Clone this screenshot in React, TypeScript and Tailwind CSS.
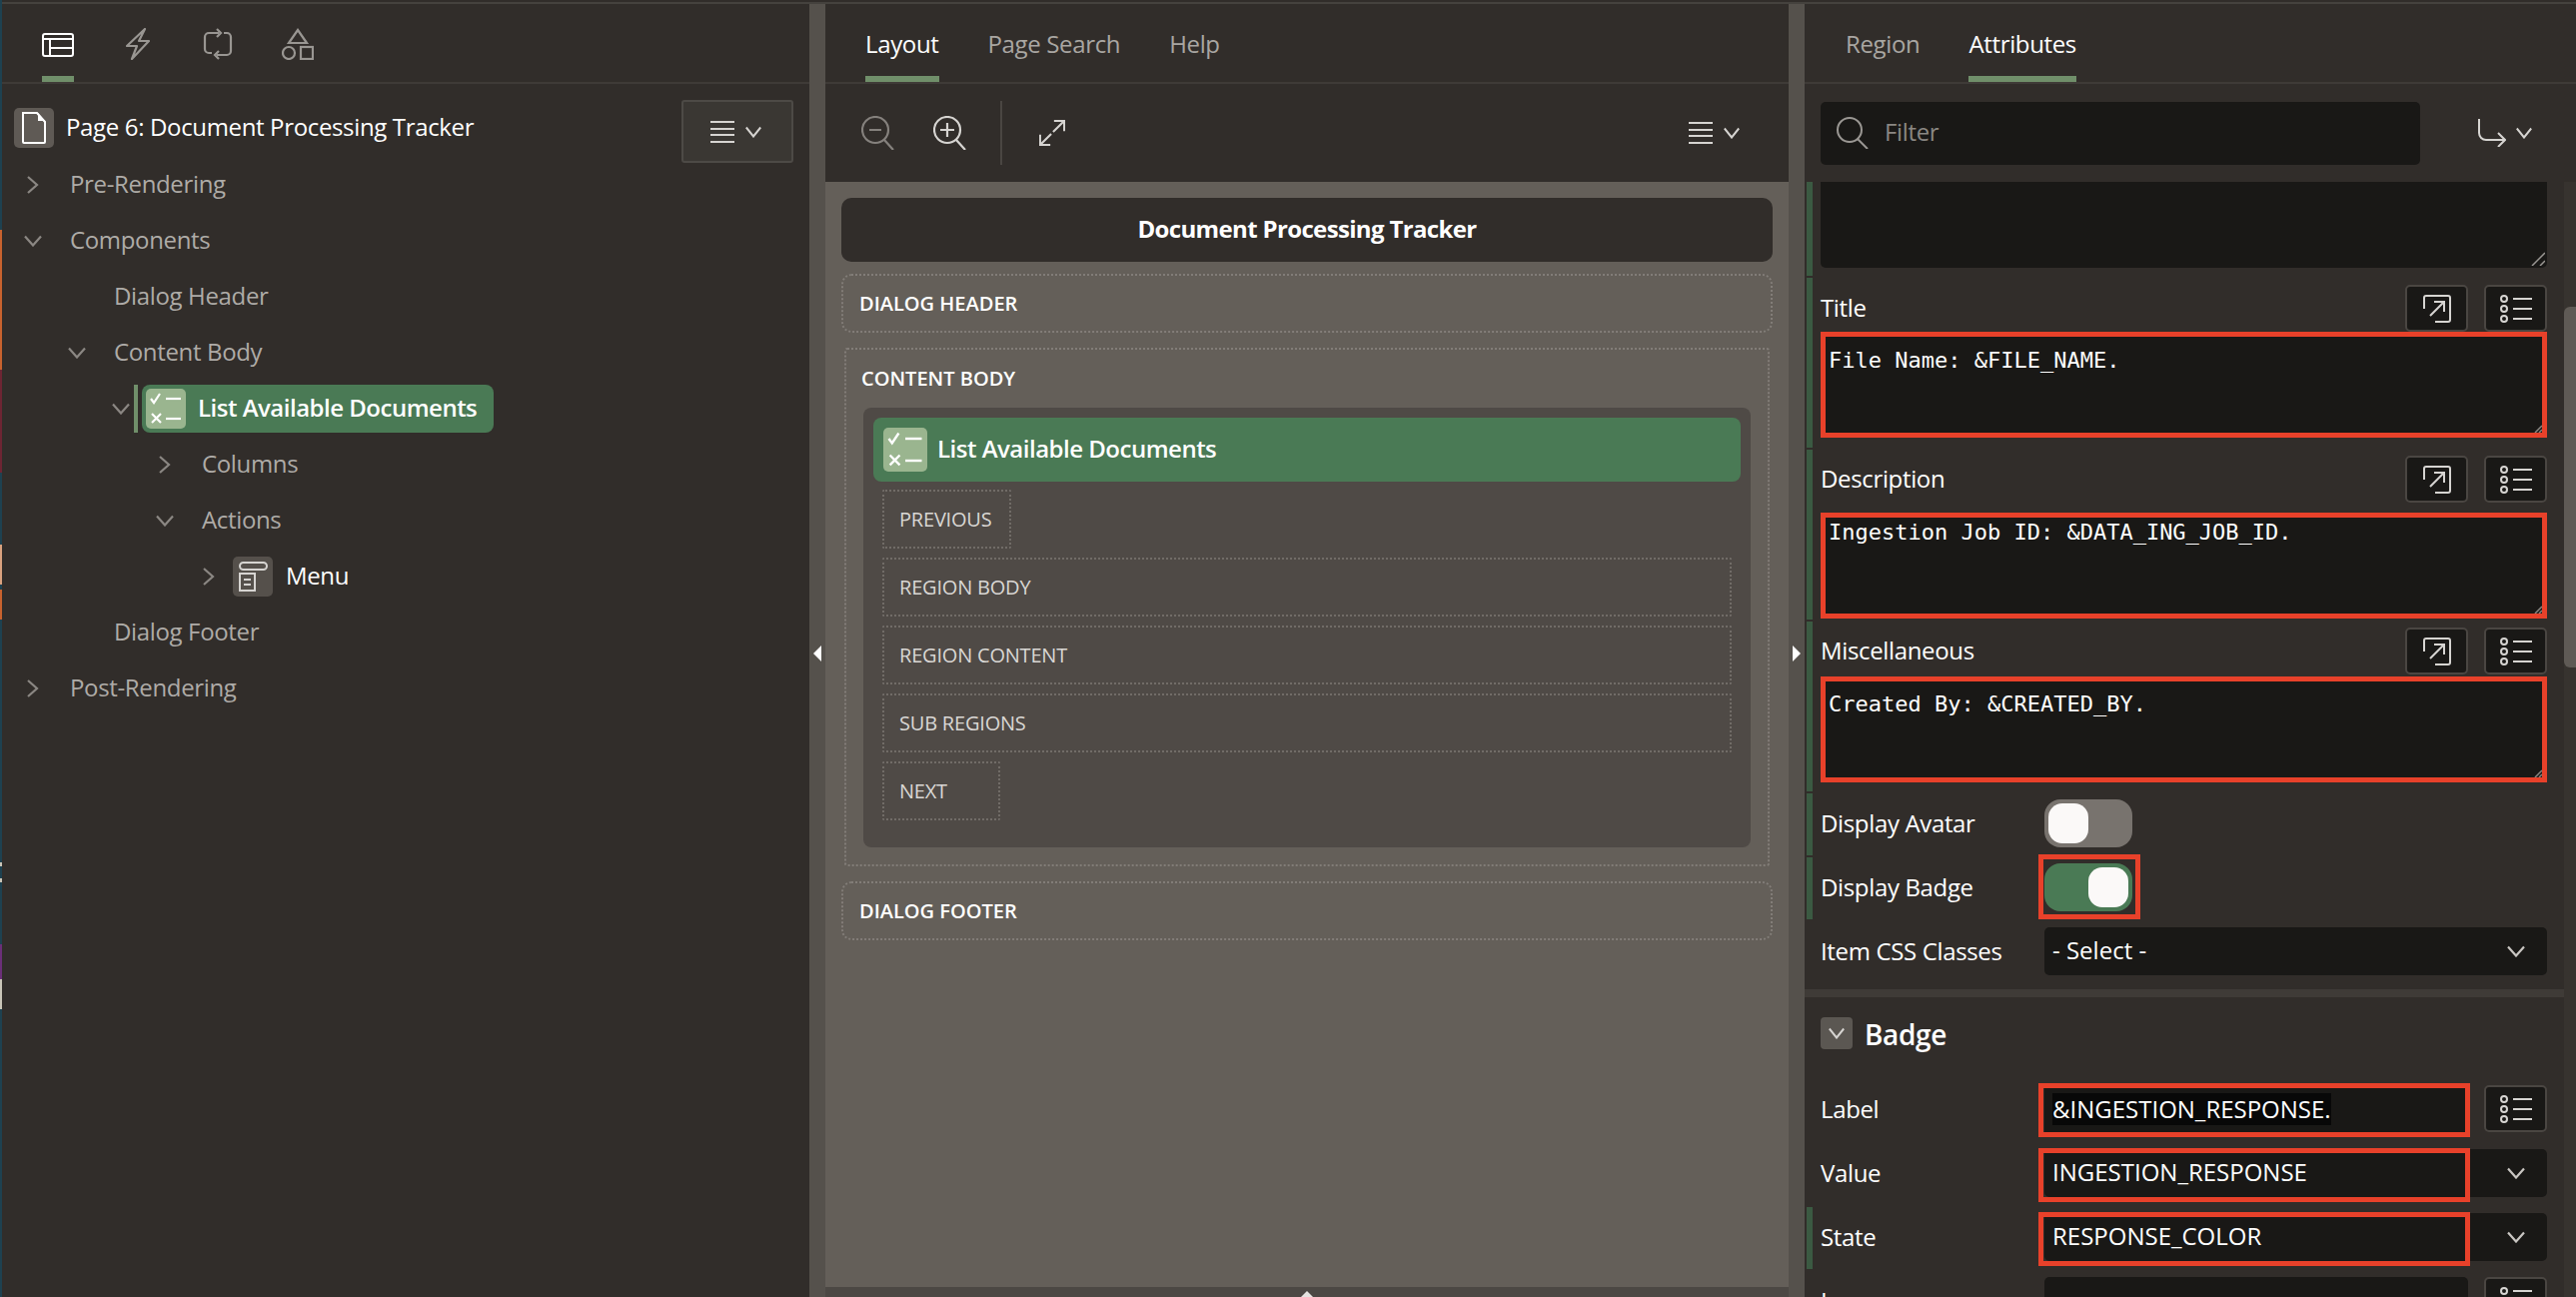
import React from 'react';

const edgeSegments = [
  { key: 'a', cls: 'h-[230px] bg-[#1e4150]' },
  { key: 'b', cls: 'h-[140px] bg-[#c8622e]' },
  { key: 'c', cls: 'h-[103px] bg-[#6d2533]' },
  { key: 'd', cls: 'h-[72px] bg-[#1e4150]' },
  { key: 'e', cls: 'h-[40px] bg-[#d9a27f]' },
  { key: 'f', cls: 'h-[5px] bg-[#1e4150]' },
  { key: 'g', cls: 'h-[30px] bg-[#c8622e]' },
  { key: 'h', cls: 'h-[243px] bg-[#1e4150]' },
  { key: 'i', cls: 'h-[4px] bg-[#c9c5b8]' },
  { key: 'j', cls: 'h-[12px] bg-[#1e4150]' },
  { key: 'k', cls: 'h-[4px] bg-[#c9c5b8]' },
  { key: 'l', cls: 'h-[62px] bg-[#1e4150]' },
  { key: 'm', cls: 'h-[35px] bg-[#6b2f78]' },
  { key: 'n', cls: 'h-[30px] bg-[#c9c5b8]' },
  { key: 'o', cls: 'h-[288px] bg-[#1e4150]' },
];

const ChevronRight = () => (
  <svg width="14" height="20" viewBox="0 0 14 20" fill="none" stroke="#8b8783" strokeWidth="2.2">
    <path d="M2 2l9 8-9 8" />
  </svg>
);

const ChevronDown = ({ color = '#8b8783', w = 20 }: { color?: string; w?: number }) => (
  <svg width={w} height="12" viewBox="0 0 20 12" fill="none" stroke={color} strokeWidth="2.2" preserveAspectRatio="none">
    <path d="M2 1.5l8 9 8-9" />
  </svg>
);

const ChecklistGlyph = ({ size }: { size: number }) => (
  <svg width={size} height={size} viewBox="0 0 40 40" fill="none" stroke="#ffffff" strokeWidth="2.2">
    <path d="M5 10l3 4 6-9" />
    <path d="M20 10h15" />
    <path d="M6 25l9 9M15 25l-9 9" />
    <path d="M20 30h15" />
  </svg>
);

const MenuLines = () => (
  <div className="flex items-center gap-[10px]">
    <svg width="24" height="22" viewBox="0 0 24 22" stroke="#d6d4d1" strokeWidth="2">
      <path d="M0 1h24M0 8h24M0 14h24M0 21h24" />
    </svg>
    <ChevronDown color="#d6d4d1" w={18} />
  </div>
);

const OpenGlyph = () => (
  <svg width="28" height="28" viewBox="0 0 28 28" fill="none" stroke="#d6d4d1" strokeWidth="2">
    <path d="M1 14V3a2 2 0 0 1 2-2h22a2 2 0 0 1 2 2v22a2 2 0 0 1-2 2H12" />
    <path d="M7 21L21 7M11 7h10v10" />
  </svg>
);

const ListGlyph = () => (
  <svg width="32" height="28" viewBox="0 0 32 28" fill="none" stroke="#d6d4d1" strokeWidth="2">
    <circle cx="4" cy="4" r="3" />
    <circle cx="4" cy="14" r="3" />
    <circle cx="4" cy="24" r="3" />
    <path d="M13 4h19M13 14h19M13 24h19" />
  </svg>
);

const IconButton = ({ children }: { children: React.ReactNode }) => (
  <div className="flex h-[47px] w-[63px] items-center justify-center rounded-[5px] border-2 border-[#4a4642] bg-[#191816]">
    {children}
  </div>
);

const Tab = ({ label, active }: { label: string; active?: boolean }) => (
  <div
    className={`flex h-full items-center pt-[8px] text-[24px] ${
      active ? 'border-b-[6px] border-[#708f6a] text-white' : 'border-b-[6px] border-transparent text-[#a9a6a2]'
    }`}
  >
    {label}
  </div>
);

const TreeRow = ({
  indent,
  chevron,
  label,
}: {
  indent: string;
  chevron?: 'right' | 'down';
  label: string;
}) => (
  <div className={`flex h-[56px] items-center ${indent}`}>
    <div className="flex w-[24px] shrink-0 items-center justify-center">
      {chevron === 'right' && <ChevronRight />}
      {chevron === 'down' && <ChevronDown />}
    </div>
    <span className="ml-[25px] pb-[3px] text-[24px] text-[#aeaba7]">{label}</span>
  </div>
);

const LeftPanel = () => (
  <div className="flex w-[808px] shrink-0 flex-col bg-[#312d2a]">
    <div className="flex h-[80px] shrink-0 items-stretch border-b-2 border-[#3f3b37] pl-[40px]">
      <div className="flex w-[32px] items-center justify-center border-b-[6px] border-[#708f6a] pt-[10px]">
        <svg width="32" height="24" viewBox="0 0 32 24" fill="none" stroke="#ffffff" strokeWidth="2">
          <rect x="1" y="1" width="30" height="22" rx="2" />
          <path d="M1 6h30M8 6v17M8 15h23" />
        </svg>
      </div>
      <div className="ml-[52px] flex items-start pt-[24px]">
        <svg width="24" height="32" viewBox="0 0 24 32" fill="none" stroke="#999692" strokeWidth="2.2" strokeLinejoin="round">
          <path d="M19 1L1 18h10L6 31l17-18H13z" />
        </svg>
      </div>
      <div className="ml-[52px] flex items-start pt-[24px]">
        <svg width="32" height="32" viewBox="0 0 32 32" fill="none" stroke="#999692" strokeWidth="2.2">
          <path d="M17 5H7a4 4 0 0 0-4 4v12a4 4 0 0 0 4 4h3" />
          <path d="M15 1l4 4-4 4" />
          <path d="M15 27h10a4 4 0 0 0 4-4V9a4 4 0 0 0-4-4h-3" />
          <path d="M17 23l-4 4 4 4" />
        </svg>
      </div>
      <div className="ml-[48px] flex items-start pt-[24px]">
        <svg width="32" height="32" viewBox="0 0 32 32" fill="none" stroke="#999692" strokeWidth="2.2">
          <path d="M16 2l9 13H7z" />
          <circle cx="7" cy="25" r="6" />
          <rect x="19" y="19" width="12" height="12" />
        </svg>
      </div>
    </div>

    <div className="flex h-[73px] shrink-0 items-start justify-between pl-[12px] pr-[16px] pt-[16px]">
      <div className="mt-[8px] flex items-center">
        <div className="flex h-[40px] w-[40px] items-center justify-center rounded-[5px] bg-[#5f5a55]">
          <svg width="40" height="40" viewBox="0 0 40 40" fill="none" stroke="#ffffff" strokeWidth="2">
            <path d="M9 5h14l8 9v20a1 1 0 0 1-1 1H10a1 1 0 0 1-1-1z" />
            <path d="M24 5v8h7z" fill="#ffffff" stroke="none" />
          </svg>
        </div>
        <span className="ml-[12px] pb-[2px] text-[24px] text-white">Page 6: Document Processing Tracker</span>
      </div>
      <div className="flex h-[63px] w-[112px] items-center justify-center rounded-[3px] border-2 border-[#4d4a46] bg-[#3a3733] pr-[3px]">
        <MenuLines />
      </div>
    </div>

    <TreeRow indent="pl-[19px]" chevron="right" label="Pre-Rendering" />
    <TreeRow indent="pl-[19px]" chevron="down" label="Components" />
    <TreeRow indent="pl-[63px]" label="Dialog Header" />
    <TreeRow indent="pl-[63px]" chevron="down" label="Content Body" />

    <div className="flex h-[56px] items-center pl-[107px]">
      <div className="flex w-[24px] shrink-0 items-center justify-center">
        <ChevronDown />
      </div>
      <div className="ml-[1px] h-[48px] w-[4px] bg-[#708f6a]" />
      <div className="ml-[4px] flex h-[48px] w-[352px] items-center rounded-[8px] bg-[#4a7a55] pl-[4px]">
        <div className="flex h-[40px] w-[40px] items-center justify-center rounded-[5px] bg-[#9ab58f]">
          <ChecklistGlyph size={40} />
        </div>
        <span className="ml-[12px] pb-[2px] text-[24px] font-semibold tracking-[-0.5px] text-white">List Available Documents</span>
      </div>
    </div>

    <TreeRow indent="pl-[151px]" chevron="right" label="Columns" />
    <TreeRow indent="pl-[151px]" chevron="down" label="Actions" />

    <div className="flex h-[56px] items-center pl-[195px]">
      <div className="flex w-[24px] shrink-0 items-center justify-center">
        <ChevronRight />
      </div>
      <div className="ml-[12px] flex h-[40px] w-[40px] items-center justify-center rounded-[5px] bg-[#55504b]">
        <svg width="40" height="40" viewBox="0 0 40 40" fill="none" stroke="#d6d4d1" strokeWidth="2">
          <rect x="7" y="6" width="27" height="7" rx="3.5" />
          <rect x="7" y="17" width="15" height="17" />
          <path d="M11 23h7M11 28h7" />
        </svg>
      </div>
      <span className="ml-[13px] pb-[2px] text-[24px] text-white">Menu</span>
    </div>

    <TreeRow indent="pl-[63px]" label="Dialog Footer" />
    <TreeRow indent="pl-[19px]" chevron="right" label="Post-Rendering" />
  </div>
);

const Splitter = ({ dir }: { dir: 'left' | 'right' }) => (
  <div className="flex w-[16px] shrink-0 items-center justify-center bg-[#55514c] pt-[5px]">
    <svg width="8" height="16" viewBox="0 0 8 16" fill="#ffffff">
      {dir === 'left' ? <path d="M8 0v16L0 8z" /> : <path d="M0 0v16l8-8z" />}
    </svg>
  </div>
);

const DottedBox = ({ label, width }: { label: string; width?: string }) => (
  <div
    className={`flex h-[59px] items-center rounded-[2px] border-2 border-dotted border-[#716c67] pl-[15px] text-[20px] font-medium tracking-[-0.2px] text-[#d9d7d4] ${
      width ?? ''
    }`}
  >
    {label}
  </div>
);

const DialogSlot = ({ label }: { label: string }) => (
  <div className="flex h-[59px] items-center rounded-[10px] border-2 border-dotted border-[#827d78] pl-[16px] text-[20px] font-semibold tracking-normal text-white">
    {label}
  </div>
);

const MiddlePanel = () => (
  <div className="flex min-w-0 flex-1 flex-col bg-[#4c4844]">
    <div className="flex h-[80px] shrink-0 gap-[49px] border-b-2 border-[#3f3b37] bg-[#312d2a] pl-[40px]">
      <Tab label="Layout" active />
      <Tab label="Page Search" />
      <Tab label="Help" />
    </div>

    <div className="flex h-[98px] shrink-0 items-center bg-[#312d2a] pl-[36px] pr-[48px]">
      <svg width="34" height="34" viewBox="0 0 34 34" fill="none" stroke="#85817d" strokeWidth="2.2">
        <circle cx="14" cy="14" r="13" />
        <path d="M8 14h12M23 24l9 10" />
      </svg>
      <svg className="ml-[38px]" width="34" height="34" viewBox="0 0 34 34" fill="none" stroke="#d6d4d1" strokeWidth="2.2">
        <circle cx="14" cy="14" r="13" />
        <path d="M7 14h14M14 7v14M23 24l9 10" />
      </svg>
      <div className="ml-[33px] h-[64px] w-[2px] bg-[#4a4642]" />
      <svg className="ml-[37px]" width="26" height="28" viewBox="0 0 28 28" fill="none" stroke="#d6d4d1" strokeWidth="2.2">
        <path d="M16 1h11v11M27 1L15 13M12 27H1V16M1 27l12-12" />
      </svg>
      <div className="ml-auto">
        <MenuLines />
      </div>
    </div>

    <div className="flex flex-1 flex-col bg-[#645f59] px-[16px] pt-[16px]">
      <div className="flex h-[64px] shrink-0 items-center justify-center rounded-[10px] bg-[#312d2a] pb-[2px] text-[24px] font-bold tracking-[-0.65px] text-white">
        Document Processing Tracker
      </div>
      <div className="mt-[12px]">
        <DialogSlot label="DIALOG HEADER" />
      </div>

      <div className="mx-[3px] mt-[15px] flex h-[519px] flex-col rounded-[3px] border-2 border-dotted border-[#827d78] px-[17px]">
        <div className="-ml-[2px] flex h-[58px] shrink-0 items-center text-[20px] font-semibold tracking-normal text-white">CONTENT BODY</div>
        <div className="flex h-[440px] flex-col rounded-[8px] bg-[#4f4a46] px-[10px] pt-[10px]">
          <div className="flex h-[64px] shrink-0 items-center rounded-[8px] bg-[#4a7a55] pl-[10px]">
            <div className="flex h-[44px] w-[44px] items-center justify-center rounded-[5px] bg-[#9ab58f]">
              <ChecklistGlyph size={44} />
            </div>
            <span className="ml-[10px] pb-[2px] text-[24px] font-semibold tracking-[-0.5px] text-white">List Available Documents</span>
          </div>
          <div className="mt-[8px] flex flex-col gap-[9px] px-[9px]">
            <DottedBox label="PREVIOUS" width="w-[129px]" />
            <DottedBox label="REGION BODY" />
            <DottedBox label="REGION CONTENT" />
            <DottedBox label="SUB REGIONS" />
            <DottedBox label="NEXT" width="w-[118px]" />
          </div>
        </div>
      </div>

      <div className="mt-[15px]">
        <DialogSlot label="DIALOG FOOTER" />
      </div>
    </div>

    <div className="flex h-[10px] shrink-0 items-end justify-center">
      <svg width="12" height="6" viewBox="0 0 12 6" fill="#e6e4e1">
        <path d="M6 0l6 6H0z" />
      </svg>
    </div>
  </div>
);

const Grip = () => (
  <svg className="absolute bottom-[2px] right-[2px]" width="14" height="14" viewBox="0 0 14 14" fill="none" stroke="#9a9793" strokeWidth="1.5">
    <path d="M1 14L14 1M9 14l5-5" />
  </svg>
);

const SmallGrip = () => (
  <svg className="absolute bottom-0 right-0" width="8" height="8" viewBox="0 0 8 8" fill="none" stroke="#8a8783" strokeWidth="1.5">
    <path d="M1 8l7-7M5 8l3-3" />
  </svg>
);

// one of the tall text areas, with the red call-out drawn as its border
const NoteField = ({
  label,
  value,
  labelRow,
  textTop,
}: {
  label: string;
  value: string;
  labelRow: string;
  textTop: string;
}) => (
  <div className="mb-[2px] flex h-[170px]">
    <div className="ml-[2px] w-[6px] shrink-0 bg-[#3b5a42]" />
    <div className="ml-[8px] flex flex-1 flex-col pr-[17px]">
      <div className={`flex items-start justify-between ${labelRow}`}>
        <span className="pt-[5px] text-[24px] text-white">{label}</span>
        <div className="flex gap-[16px]">
          <IconButton>
            <OpenGlyph />
          </IconButton>
          <IconButton>
            <ListGlyph />
          </IconButton>
        </div>
      </div>
      <div
        className={`relative h-[106px] border-[5px] border-[#e8412a] bg-[#191816] pl-[3px] font-['DejaVu_Sans_Mono',monospace] text-[22px] leading-[28px] tracking-normal text-white ${textTop}`}
      >
        {value}
        <SmallGrip />
      </div>
    </div>
  </div>
);

const FormRow = ({
  label,
  marked,
  children,
}: {
  label: string;
  marked?: boolean;
  children: React.ReactNode;
}) => (
  <div className="mb-[2px] flex h-[62px] shrink-0">
    <div className={`ml-[2px] w-[6px] shrink-0 ${marked ? 'bg-[#3b5a42]' : ''}`} />
    <div className="ml-[8px] flex w-[224px] shrink-0 items-center pb-[3px] text-[24px] text-white">{label}</div>
    <div className="flex flex-1 items-start pr-[17px] pt-[6px]">{children}</div>
  </div>
);

const SelectBox = ({ value, mark }: { value: string; mark?: boolean }) => (
  <div className="relative flex h-[48px] w-full items-center justify-between rounded-[5px] bg-[#191816] pl-[8px] pr-[21px] text-[24px] tracking-normal text-white">
    <span className="pb-[2px]">{value}</span>
    <ChevronDown color="#c9c6c2" />
    {mark && <div className="absolute -left-[6px] -top-[1px] h-[54px] w-[432px] border-[5px] border-[#e8412a]" />}
  </div>
);

const Toggle = ({ on, mark }: { on?: boolean; mark?: boolean }) => (
  <div
    className={`relative flex h-[48px] w-[88px] items-center rounded-[16px] px-[4px] ${
      on ? 'justify-end bg-[#4a7a55]' : 'bg-[#78736e]'
    }`}
  >
    <div className="h-[40px] w-[40px] rounded-[14px] bg-[#fbf9f8]" />
    {mark && <div className="absolute -left-[6px] -top-[9px] h-[65px] w-[102px] border-[5px] border-[#e8412a]" />}
  </div>
);

const RightPanel = () => (
  <div className="flex w-[772px] shrink-0 flex-col bg-[#312d2a]">
    <div className="flex h-[80px] shrink-0 gap-[49px] border-b-2 border-[#3f3b37] pl-[41px]">
      <Tab label="Region" />
      <Tab label="Attributes" active />
    </div>

    <div className="flex h-[98px] shrink-0 items-center pl-[16px]">
      <div className="flex h-[63px] w-[600px] items-center rounded-[5px] bg-[#191816] pl-[16px]">
        <svg width="32" height="32" viewBox="0 0 32 32" fill="none" stroke="#9a9793" strokeWidth="2">
          <circle cx="13" cy="13" r="12" />
          <path d="M21 22l10 10" />
        </svg>
        <span className="ml-[16px] pb-[2px] text-[24px] text-[#8a8783]">Filter</span>
      </div>
      <div className="ml-[58px] flex items-center gap-[9px]">
        <svg width="28" height="28" viewBox="0 0 28 28" fill="none" stroke="#d6d4d1" strokeWidth="2">
          <path d="M1 0v14a7 7 0 0 0 7 7h19M20 14l7 7-7 7" />
        </svg>
        <ChevronDown color="#d6d4d1" w={18} />
      </div>
    </div>

    <div className="flex min-h-0 flex-1">
      <div className="min-w-0 flex-1 overflow-hidden">
        <div className="mb-[2px] flex h-[94px]">
          <div className="ml-[2px] w-[6px] shrink-0 bg-[#3b5a42]" />
          <div className="relative ml-[8px] mr-[17px] h-[86px] flex-1 rounded-b-[5px] bg-[#191816]">
            <Grip />
          </div>
        </div>

        <NoteField label="Title" value="File Name: &FILE_NAME." labelRow="h-[54px] pt-[7px]" textTop="pt-[10px]" />
        <NoteField label="Description" value="Ingestion Job ID: &DATA_ING_JOB_ID." labelRow="h-[63px] pt-[6px]" textTop="pt-[1px]" />
        <NoteField label="Miscellaneous" value="Created By: &CREATED_BY." labelRow="h-[55px] pt-[6px]" textTop="pt-[9px]" />

        <FormRow label="Display Avatar" marked>
          <Toggle />
        </FormRow>
        <FormRow label="Display Badge" marked>
          <Toggle on mark />
        </FormRow>
        <FormRow label="Item CSS Classes">
          <SelectBox value="- Select -" />
        </FormRow>

        <div className="mt-[6px] h-[8px] bg-[#3f3b37]" />

        <div className="flex h-[82px] items-start pl-[16px] pt-[20px]">
          <div className="flex h-[32px] w-[32px] items-center justify-center rounded-[4px] bg-[#5b5752]">
            <ChevronDown color="#d6d4d1" w={18} />
          </div>
          <span className="ml-[12px] text-[28px] font-semibold leading-[34px] text-white">Badge</span>
        </div>

        <FormRow label="Label">
          <div className="relative flex h-[47px] flex-1 items-center bg-[#191816] pl-[8px] text-[24px] tracking-normal text-white">
            <span className="bg-[#080808] leading-[32px]">&amp;INGESTION_RESPONSE.</span>
            <div className="absolute -left-[6px] -top-[2px] h-[54px] w-[432px] border-[5px] border-[#e8412a]" />
          </div>
          <div className="ml-[16px]">
            <IconButton>
              <ListGlyph />
            </IconButton>
          </div>
        </FormRow>
        <FormRow label="Value">
          <SelectBox value="INGESTION_RESPONSE" mark />
        </FormRow>
        <FormRow label="State" marked>
          <SelectBox value="RESPONSE_COLOR" mark />
        </FormRow>
        <FormRow label="Icon">
          <div className="h-[47px] flex-1 rounded-[5px] bg-[#191816]" />
          <div className="ml-[16px]">
            <IconButton>
              <ListGlyph />
            </IconButton>
          </div>
        </FormRow>
      </div>

      <div className="w-[12px] shrink-0 bg-[#37332f]">
        <div className="mt-[125px] h-[361px] rounded-l-[6px] bg-[#5f5a55]" />
      </div>
    </div>
  </div>
);

export default function App() {
  return (
    <div className="flex h-[1298px] w-[2578px] overflow-hidden bg-[#312d2a] font-['Open_Sans',sans-serif] tracking-[-0.35px]">
      <div className="w-[2px] shrink-0">
        {edgeSegments.map((s) => (
          <div key={s.key} className={s.cls} />
        ))}
      </div>
      <div className="flex min-w-0 flex-1 flex-col">
        <div className="h-[4px] shrink-0 border-b-2 border-[#45423e]" />
        <div className="flex min-h-0 flex-1">
          <LeftPanel />
          <Splitter dir="left" />
          <MiddlePanel />
          <Splitter dir="right" />
          <RightPanel />
        </div>
      </div>
    </div>
  );
}
